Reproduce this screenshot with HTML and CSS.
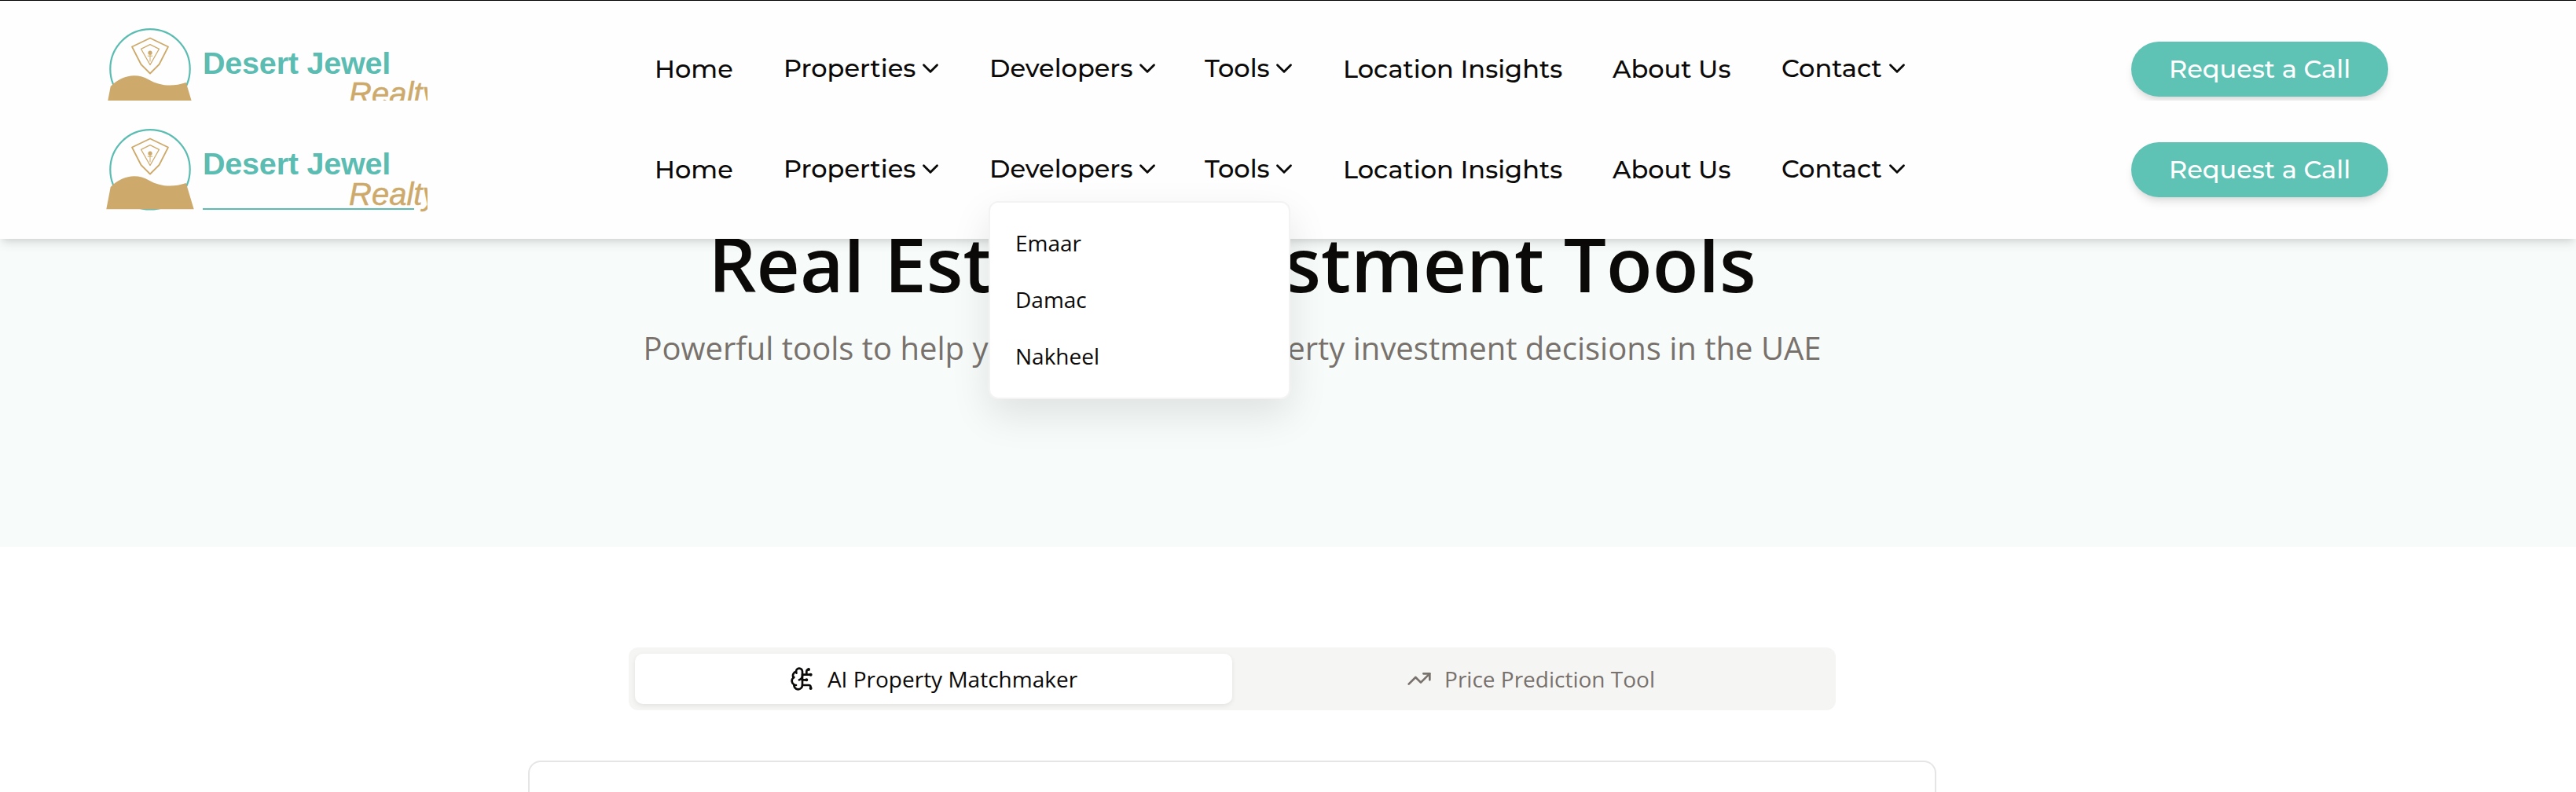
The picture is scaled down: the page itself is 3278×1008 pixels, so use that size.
FILE: index.html
```html
<!DOCTYPE html>
<html lang="en">
<head>
<meta charset="utf-8">
<title>Real Estate Investment Tools</title>
<link rel="stylesheet" href="styles.css">
</head>
<body>
<svg class="defs" aria-hidden="true">
  <symbol id="logo-mark" viewBox="0 0 114 110">
    <circle cx="56" cy="53.800" r="50.700" fill="none" stroke="#5bbcb2" stroke-width="2.200"/>
    <path d="M56 14.500 79 25.500 67.500 48 56 59.500 44.500 48 33 25.500Z" fill="none" stroke="#cdaa6b" stroke-width="1.800"/>
    <path d="M56 22.700 67.500 28.300 56 48.500 44.500 28.300Z" fill="none" stroke="#cdaa6b" stroke-width="1.300"/>
    <path d="M56 33v11M53.200 37.200h5.600" fill="none" stroke="#cdaa6b" stroke-width="1"/>
    <circle cx="56" cy="33.200" r="2.600" fill="#cdaa6b"/>
    <path d="M5.700 76C20 62 38 58 55 67.700C68 75 84 77 101.700 71L111.700 104.300H.3Z" fill="#cdaa6b"/>
  </symbol>
  <symbol id="chevron" viewBox="0 0 24 24"><path d="m6 9 6 6 6-6"/></symbol>
</svg>

<header class="site-header">
  <div class="bar bar-clipped">
    <a class="logo"><svg class="mark"><use href="#logo-mark"/></svg><span class="name">Desert Jewel</span><span class="sub">Realty</span><span class="rule"></span></a>
    <nav class="nav">
      <a class="item home"><span>Home</span></a>
      <a class="item properties drop"><span>Properties</span><svg class="chev"><use href="#chevron"/></svg></a>
      <a class="item developers drop"><span>Developers</span><svg class="chev"><use href="#chevron"/></svg></a>
      <a class="item tools drop"><span>Tools</span><svg class="chev"><use href="#chevron"/></svg></a>
      <a class="item location"><span>Location Insights</span></a>
      <a class="item about"><span>About Us</span></a>
      <a class="item contact drop"><span>Contact</span><svg class="chev"><use href="#chevron"/></svg></a>
    </nav>
    <a class="call">Request a Call</a>
  </div>
  <div class="bar bar-main">
    <a class="logo"><svg class="mark"><use href="#logo-mark"/></svg><span class="name">Desert Jewel</span><span class="sub">Realty</span><span class="rule"></span></a>
    <nav class="nav">
      <a class="item home"><span>Home</span></a>
      <a class="item properties drop"><span>Properties</span><svg class="chev"><use href="#chevron"/></svg></a>
      <a class="item developers drop"><span>Developers</span><svg class="chev"><use href="#chevron"/></svg></a>
      <a class="item tools drop"><span>Tools</span><svg class="chev"><use href="#chevron"/></svg></a>
      <a class="item location"><span>Location Insights</span></a>
      <a class="item about"><span>About Us</span></a>
      <a class="item contact drop"><span>Contact</span><svg class="chev"><use href="#chevron"/></svg></a>
    </nav>
    <a class="call">Request a Call</a>
  </div>
  <div class="menu">
    <a>Emaar</a>
    <a>Damac</a>
    <a>Nakheel</a>
  </div>
</header>

<section class="hero">
  <div class="hero-inner">
    <h1>Real Estate Investment Tools</h1>
    <p>Powerful tools to help you make smart property investment decisions in the UAE</p>
  </div>
</section>

<main class="content">
  <div class="tabs">
    <button class="tab active">
      <svg class="icon" viewBox="0 0 24 24"><path d="M12 5a3 3 0 1 0-5.997.125 4 4 0 0 0-2.526 5.770 4 4 0 0 0 .556 6.588A4 4 0 1 0 12 18Z"/><path d="M9 13a4.500 4.500 0 0 0 3-4"/><path d="M6.003 5.125A3 3 0 0 0 6.401 6.500"/><path d="M3.477 10.896a4 4 0 0 1 .585-.396"/><path d="M6 18a4 4 0 0 1-1.967-.516"/><path d="M12 13h4"/><path d="M12 18h6a2 2 0 0 1 2 2v1"/><path d="M12 8h8"/><path d="M16 8V5a2 2 0 0 1 2-2"/><circle cx="16" cy="13" r=".5"/><circle cx="18" cy="3" r=".5"/><circle cx="20" cy="21" r=".5"/><circle cx="20" cy="8" r=".5"/></svg>
      <span>AI Property Matchmaker</span>
    </button>
    <button class="tab">
      <svg class="icon" viewBox="0 0 24 24"><path d="M22 7 13.500 15.500 8.500 10.500 2 17"/><path d="M16 7h6v6"/></svg>
      <span>Price Prediction Tool</span>
    </button>
  </div>
  <div class="card"></div>
</main>
</body>
</html>
```
FILE: styles.css
```css
* { box-sizing: border-box; }
body {
  margin: 0;
  height: 1008px;
  overflow: hidden;
  background: #fff;
  color: #0c0a09;
  font-family: "Open Sans", "Noto Sans", sans-serif;
}
svg { fill: none; stroke: currentColor; stroke-width: 2; stroke-linecap: round; stroke-linejoin: round; }
.defs { position: absolute; width: 0; height: 0; }

.site-header {
  position: relative;
  z-index: 2;
  height: 304px;
  background: #fefefe;
  border-top: 1px solid #000;
  box-shadow: 0 8px 12px -2px rgba(0, 0, 0, .1), 0 4px 8px -4px rgba(0, 0, 0, .1);
}
.bar { display: flex; align-items: flex-start; padding: 0 0 0 134px; height: 128px; }
.bar-clipped { height: 127px; overflow: hidden; }
.bar-clipped > * { margin-top: -1px; }
.bar-main { height: 176px; }

.logo {
  display: grid;
  grid-template-columns: 124px 286px;
  grid-template-rows: 99px 40px;
  width: 410px;
  height: 144px;
  overflow: hidden;
  font-family: "Liberation Sans", Arial, sans-serif;
  white-space: nowrap;
}
.mark { grid-row: 1 / 3; width: 114px; height: 110px; margin-top: 34px; margin-left: 1px; stroke: none; }
.name { color: #5bbcb2; font-size: 39.5px; font-weight: 700; line-height: 46px; letter-spacing: -.2px; margin-top: 57px; }
.sub { grid-column: 2; grid-row: 2; color: #cdaa6b; -webkit-text-stroke: .5px #cdaa6b; font-size: 40px; font-style: italic; line-height: 46px; margin-left: 186px; margin-top: -3px; }
.rule { grid-column: 2; grid-row: 2; width: 269px; height: 2px; margin-top: 38px; background: #5bbcb2; }

.nav { display: flex; margin-left: 289px; padding-top: 63px; font-family: "Montserrat", sans-serif; font-size: 32px; font-weight: 500; line-height: 48px; }
.item { display: flex; align-items: center; height: 50px; white-space: nowrap; }
.drop { height: 47px; }
.chev { width: 34px; height: 34px; margin-left: auto; margin-right: -1px; }
.home { width: 164px; }
.properties { width: 203px; margin-right: 59px; }
.developers { width: 217px; margin-right: 57px; }
.tools { width: 117px; margin-right: 59px; }
.location { width: 343px; }
.about { width: 215px; }
.contact { width: 163px; }
.call {
  width: 327px;
  height: 70px;
  margin: 53px 0 0 282px;
  border-radius: 35px;
  background: #5ec2b5;
  color: #fff;
  font: 500 32px/70px "Montserrat", sans-serif;
  text-align: center;
  white-space: nowrap;
  box-shadow: 0 8px 12px -2px rgba(0, 0, 0, .1), 0 4px 8px -4px rgba(0, 0, 0, .1);
}
.bar-clipped .call { margin-top: 52px; }

.menu {
  position: absolute;
  left: 1258px;
  top: 255px;
  width: 384px;
  height: 252px;
  padding: 15px 0;
  border: 2px solid #f3f3f3;
  border-radius: 12px;
  background: #fff;
  box-shadow: 0 20px 50px rgba(0, 0, 0, .1);
}
.menu a { display: block; padding: 16px 32px; font-size: 28px; line-height: 40px; }

.hero { display: flow-root; height: 392px; background: #f7fbfa; }
.hero-inner { width: 3136px; text-align: center; white-space: nowrap; }
h1 { margin: -17px 0 0; font-size: 96px; font-weight: 600; line-height: 96px; }
.hero p { margin: 32px 0 0; color: #78716c; font-size: 40px; line-height: 56px; }

.content { width: 3136px; padding-top: 128px; }
.tabs { display: grid; grid-template-columns: 1fr 1fr; width: 1536px; height: 80px; margin: 0 auto; padding: 8px; border-radius: 12px; background: #f5f5f4; }
.tab { display: flex; align-items: center; justify-content: center; gap: 16px; padding: 0 0 1px; border: 0; border-radius: 10px; background: none; color: #78716c; font: 400 28px/40px "Open Sans", sans-serif; }
.tab.active { background: #fff; color: #0c0a09; box-shadow: 0 2px 6px rgba(0, 0, 0, .08); }
.icon { width: 32px; height: 32px; }
.card { width: 1792px; height: 40px; margin: 64px auto 0; border: 2px solid #e5e5e5; border-bottom: 0; border-radius: 16px 16px 0 0; background: #fff; }
```
